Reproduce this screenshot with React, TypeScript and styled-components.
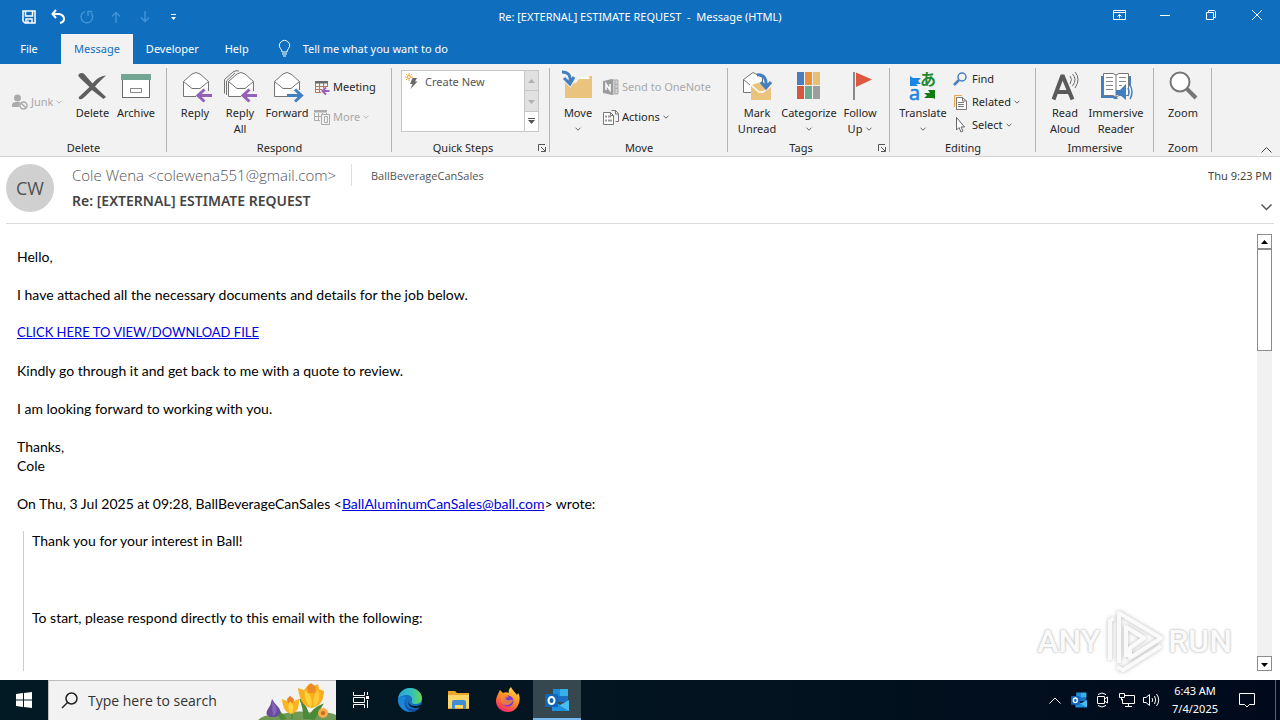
import React from "react";
import styled, { createGlobalStyle } from "styled-components";

const ui = `"Noto Sans", "Open Sans", sans-serif`;
const humanist = `"Open Sans", "Noto Sans", sans-serif`;
const BLUE = "#106ebe";

const GlobalStyle = createGlobalStyle`
  *, *::before, *::after { box-sizing: border-box; }
  body { margin: 0; font-family: ${ui}; font-size: 11px; color: #262626; background: #fff; }
  button, input { font: inherit; color: inherit; }
  button { border: 0; background: none; padding: 0; cursor: pointer; }
  svg { display: block; flex: none; overflow: visible; }
  p { margin: 0; }
`;

const Window = styled.div`
  display: flex;
  flex-direction: column;
  height: 100vh;
  overflow: hidden;
`;

/* ---------- title bar and tabs ---------- */

const TitleBar = styled.header`
  display: grid;
  grid-template-columns: 1fr auto 1fr;
  align-items: center;
  height: 34px;
  flex: none;
  background: ${BLUE};
  color: #fff;
`;

const QuickAccess = styled.div`
  display: flex;
  align-items: center;
  padding-left: 14px;
`;

const QuickButton = styled.button<{ $dim?: boolean }>`
  display: grid;
  place-items: center;
  width: 29px;
  height: 32px;
  color: ${(p) => (p.$dim ? "#3f93d8" : "#fff")};
`;

const WindowTitle = styled.h1`
  margin: 0;
  padding-bottom: 2px;
  font-size: 11px;
  font-weight: 400;
  white-space: pre;
`;

const WindowButtons = styled.div`
  display: flex;
  justify-content: flex-end;
  height: 34px;
  padding-bottom: 4px;
`;

const WindowButton = styled.button`
  display: grid;
  place-items: center;
  width: 46px;
`;

const TabBar = styled.nav`
  display: flex;
  align-items: stretch;
  height: 30px;
  flex: none;
  background: ${BLUE};
  color: #fff;
`;

const Tab = styled.button<{ $active?: boolean; $file?: boolean }>`
  min-width: ${(p) => (p.$file ? 61 : 50)}px;
  padding: 0 ${(p) => (p.$file ? 16 : 13)}px 2px 13px;
  color: ${(p) => (p.$active ? BLUE : "#fff")};
  background: ${(p) => (p.$active ? "#f2f2f2" : "transparent")};
`;

const TellMe = styled.button`
  display: flex;
  align-items: center;
  gap: 12px;
  padding: 0 0 2px 16px;
  color: #fff;
`;

/* ---------- ribbon ---------- */

const Ribbon = styled.div`
  display: flex;
  height: 93px;
  flex: none;
  background: #f2f2f2;
  border-bottom: 1px solid #d2d2d2;
`;

const Group = styled.section<{ $width: number }>`
  display: flex;
  flex-direction: column;
  flex: none;
  width: ${(p) => p.$width}px;
  padding-top: 4px;
  position: relative;

  &::after {
    content: "";
    position: absolute;
    right: 0;
    top: 4px;
    bottom: 4px;
    width: 1px;
    background: #b4b4b4;
  }
`;

const GroupBody = styled.div<{ $pad?: number }>`
  display: flex;
  align-items: flex-start;
  flex: 1;
  padding-left: ${(p) => p.$pad ?? 6}px;
`;

const GroupFooter = styled.div`
  display: flex;
  align-items: center;
  height: 16px;
`;

const GroupName = styled.h2`
  flex: 1;
  margin: 0;
  font-size: 11px;
  font-weight: 400;
  line-height: 16px;
  text-align: center;
`;

const Launcher = styled.button`
  display: grid;
  place-items: center;
  width: 16px;
  height: 16px;
`;

const BigButton = styled.button<{ $width: number }>`
  display: flex;
  flex-direction: column;
  align-items: center;
  flex: none;
  gap: 3px;
  width: ${(p) => p.$width}px;
  padding-top: 2px;
  line-height: 16px;
`;

const BigLabel = styled.span`
  display: flex;
  flex-direction: column;
  align-items: center;
  white-space: nowrap;
`;

const LabelLine = styled.span`
  display: flex;
  align-items: center;
  gap: 4px;
  height: 16px;
`;

const columnTop = { 1: 23, 2: 8, 3: 0 };

const SmallColumn = styled.div<{ $rows: 1 | 2 | 3 }>`
  display: flex;
  flex-direction: column;
  gap: ${(p) => (p.$rows === 2 ? 8 : 1)}px;
  padding: ${(p) => columnTop[p.$rows]}px ${(p) => (p.$rows === 1 ? 8 : 0)}px 0 3px;
`;

const SmallButton = styled.button<{ $dim?: boolean }>`
  display: flex;
  align-items: center;
  gap: 3px;
  height: 22px;
  line-height: 16px;
  white-space: nowrap;
  color: ${(p) => (p.$dim ? "#a9a9a9" : "#262626")};
`;

const Gallery = styled.div`
  display: flex;
  flex: none;
  width: 138px;
  height: 62px;
  margin-top: 2px;
  background: #fff;
  border: 1px solid #c6c6c6;
`;

const GalleryItem = styled.button`
  display: flex;
  align-items: center;
  flex: 1;
  gap: 4px;
  height: 20px;
  padding-left: 3px;
  color: #555;
`;

const GallerySteps = styled.div`
  display: flex;
  flex-direction: column;
  width: 14px;
  border-left: 1px solid #c6c6c6;
`;

const GalleryStep = styled.button<{ $dim?: boolean }>`
  display: grid;
  place-items: center;
  flex: 1;
  background: ${(p) => (p.$dim ? "#e1e1e1" : "#fff")};
  color: ${(p) => (p.$dim ? "#b0b0b0" : "#555")};
  & + & { border-top: 1px solid #c6c6c6; }
`;

const Collapse = styled.button`
  align-self: flex-end;
  margin: 0 8px 3px auto;
`;

/* ---------- message ---------- */

const MessageHead = styled.div`
  display: flex;
  flex: none;
  gap: 18px;
  height: 67px;
  margin: 0 6px;
  border-bottom: 1px solid #dcdcdc;
`;

const Avatar = styled.div`
  display: grid;
  place-items: center;
  flex: none;
  width: 48px;
  height: 48px;
  margin-top: 7px;
  border-radius: 50%;
  background: #d0d0d0;
  color: #505050;
  font-family: ${humanist};
  font-size: 18px;
`;

const HeadText = styled.div`
  flex: 1;
  padding-top: 7px;
`;

const SenderRow = styled.div`
  display: flex;
  align-items: center;
  height: 22px;
  font-family: ${humanist};
  color: #555;
`;

const Sender = styled.span`
  padding-right: 15px;
  border-right: 1px solid #dedede;
  font-size: 15px;
  font-weight: 300;
  line-height: 22px;
`;

const Recipient = styled.span`
  padding-left: 19px;
`;

const Subject = styled.h2`
  margin: 2px 0 0;
  font-size: 14px;
  font-weight: 600;
  line-height: 26px;
  color: #444;
`;

const HeadMeta = styled.div`
  display: flex;
  flex-direction: column;
  align-items: flex-end;
  gap: 19px;
  padding: 10px 2px 0 0;
  line-height: 18px;
  color: #444;
`;

const Reading = styled.main`
  display: flex;
  flex: 1;
  min-height: 0;
  padding: 10px 8px 9px 17px;
  position: relative;
`;

const Letter = styled.article`
  flex: 1;
  overflow: hidden;
  padding-top: 13px;
  font-family: Lato, "Open Sans", sans-serif;
  font-size: 14px;
  line-height: 19px;
  color: #000;

  p + p { margin-top: 19px; }
  a { color: #0000e0; }
`;

const LinkLine = styled.p`
  font-size: 13px;
`;

const Quote = styled.blockquote`
  margin: 18px 0 0 6px;
  padding-left: 8px;
  height: 142px;
  border-left: 1px solid #ccc;
  p + p { margin-top: 58px; }
`;

const Scrollbar = styled.div`
  display: flex;
  flex-direction: column;
  width: 15px;
  background: #f1f1f1;
`;

const ScrollArrow = styled.button`
  display: grid;
  place-items: center;
  height: 15px;
  border: 1px solid #8c8c8c;
  background: #fff;
  color: #000;
`;

const ScrollTrack = styled.div`
  flex: 1;
`;

const ScrollThumb = styled.div`
  height: 102px;
  border: 1px solid #8c8c8c;
  background: #fff;
`;

const Watermark = styled.div`
  position: absolute;
  right: 48px;
  bottom: 8px;
  display: flex;
  align-items: center;
  gap: 4px;
  font-family: Roboto, "Liberation Sans", sans-serif;
  font-size: 32px;
  font-weight: 500;
  line-height: 62px;
  color: #fafafa;
  text-shadow: 0 0 3px #bbb, 0 0 2px #ccc;
  pointer-events: none;

  svg { filter: drop-shadow(0 0 2px #bbb); }
`;

/* ---------- taskbar ---------- */

const Taskbar = styled.footer`
  display: flex;
  flex: none;
  height: 40px;
  background: linear-gradient(90deg, #021a24, #03131f 60%, #000a1c);
  color: #fff;
`;

const TaskButton = styled.button<{ $active?: boolean }>`
  display: grid;
  place-items: center;
  width: 48px;
  background: ${(p) => (p.$active ? "#37474f" : "transparent")};
  box-shadow: ${(p) => (p.$active ? "inset 0 -2px #76b9ed" : "none")};
`;

const Search = styled.label`
  display: flex;
  align-items: center;
  width: 288px;
  padding-left: 12px;
  gap: 10px;
  background: #f2f2f2;
  border: 1px solid #bdbdbd;
  border-width: 1px 0 0 1px;
`;

const SearchInput = styled.input`
  flex: 1;
  min-width: 0;
  padding: 0;
  border: 0;
  outline: 0;
  background: none;
  font-family: ${humanist};
  font-size: 14px;
  color: #333;
  &::placeholder { color: #333; opacity: 1; }
`;

const Pinned = styled.div`
  display: flex;
  gap: 1px;
  padding-left: 1px;
`;

const Tray = styled.div`
  display: flex;
  margin-left: auto;
`;

const TrayButton = styled.button<{ $wide?: boolean }>`
  display: grid;
  place-items: center;
  width: ${(p) => (p.$wide ? 56 : 24)}px;
`;

const Clock = styled.button`
  width: 48px;
  margin-left: 8px;
  line-height: 18px;
  white-space: nowrap;
`;

const ShowDesktop = styled.button`
  width: 5px;
  border-left: 1px solid #5b6570;
`;

/* ---------- drawings ---------- */

const Chevron = ({ color = "#666" }: { color?: string }) => (
  <svg width="6" height="4" viewBox="0 0 6 4" fill="none" stroke={color}>
    <path d="M.5 .7 3 3.2 5.500 .7" />
  </svg>
);

const envelope = "M4.500 26.500V11.500L13 4Q17 1 21 4L29.500 11.500V26.500Z";
const flap = "M4.500 11.500 13 18.500H21L29.500 11.500";

const ReplyIcon = ({ all = false }: { all?: boolean }) => (
  <svg width="32" height="32" viewBox="0 0 32 32" fill="none" stroke="#747474">
    {all && <path d="M.5 23.500V9.500L9 2Q12 0 15 1M2.500 25V11L11 3" />}
    <path d={envelope} fill="#fff" />
    <path d={flap} />
    <path d="M17 27V24L25 18H30V32H19Z" fill="#f2f2f2" stroke="none" />
    <path d="M29.500 17V21" />
    <path d="M33 25.500H20M25.500 19.500 19 25.500l6.500 6" stroke="#9560b8" strokeWidth="3" />
  </svg>
);

const ForwardIcon = () => (
  <svg width="32" height="32" viewBox="0 0 32 32" fill="none" stroke="#747474">
    <g transform="translate(-1 0)">
      <path d={envelope} fill="#fff" />
      <path d={flap} />
    </g>
    <path d="M16 27V23H22L25 18H30V32H17Z" fill="#f2f2f2" stroke="none" />
    <path d="M28.500 17V20" />
    <path d="M16 25.500H29M24 19.500l6.500 6-6.500 6" stroke="#427fc0" strokeWidth="3" />
  </svg>
);

const DeleteIcon = () => (
  <svg width="32" height="32" viewBox="0 0 32 32">
    <path fill="#5f5f5f" d="M3 4C6 2 8 3 10 6L16.500 13.500C20 9 25 6 30 5.500C26 9 22 13 19 16.500L30 27 27.500 29 16 20C12 23 9 27 6 29C3 30 1.500 28 4 26L13.500 17 5 9C3 7 1.500 5.500 3 4Z" />
  </svg>
);

const ArchiveIcon = () => (
  <svg width="32" height="32" viewBox="0 0 32 32">
    <rect x="2.500" y="9.500" width="27" height="18" fill="#fff" stroke="#6b6b6b" />
    <rect x="1" y="4" width="30" height="6" fill="#72a592" />
    <rect x="10.500" y="18.500" width="11" height="4" fill="none" stroke="#8a8a8a" />
  </svg>
);

const JunkIcon = () => (
  <svg width="16" height="16" viewBox="0 0 16 16">
    <circle cx="5.500" cy="4" r="3.500" fill="#ababab" />
    <path d="M0 13V10Q1 8 4 8H8L7 13Z" fill="#ababab" />
    <circle cx="11.500" cy="11.500" r="3.500" fill="#f2f2f2" stroke="#ababab" strokeWidth="1.500" />
    <path d="m9 9 5 5" stroke="#ababab" strokeWidth="1.500" />
  </svg>
);

const MeetingIcon = () => (
  <svg width="16" height="16" viewBox="0 0 16 16" fill="none">
    <path d="M1.500 4V13.500H7M13.500 4V8M1.500 7.500H13M5.500 4V13M9.500 4V9M1.500 10.500H8" stroke="#b97a52" />
    <path d="M1 2H14V4.500H1Z" fill="#6b6b6b" />
    <path d="M15.500 12H9M12 8.500 8.500 12l3.500 3.500" stroke="#9560b8" strokeWidth="2" />
  </svg>
);

const MoreIcon = () => (
  <svg width="16" height="16" viewBox="0 0 16 16" fill="none" stroke="#ababab">
    <path d="M.5 4V11.500H6M.5 7.500H7M4.500 4V11M8.500 4V5M12.500 4V5" />
    <path d="M0 1H13V3.500H0Z" fill="#ababab" stroke="none" />
    <path d="M7.500 5.500H15.500V15.500H7.500ZM10.500 7.500H13.500V13.500H10.500Z" />
  </svg>
);

const QuickStepIcon = () => (
  <svg width="16" height="16" viewBox="0 0 16 16">
    <path d="M7.500 5H12L10 8.500H12.500L5.500 16 7.500 11H5Z" fill="#6b6b6b" />
    <path d="M4 0V2M4 6V8M0 4H2M6 4H8M1 1 2.500 2.500M7 1 5.500 2.500M1 7 2.500 5.500" stroke="#e8a64a" fill="none" />
    <circle cx="4" cy="4" r="1.500" stroke="#e8a64a" fill="#fff" />
  </svg>
);

const MoveIcon = () => (
  <svg width="32" height="32" viewBox="0 0 32 32">
    <path d="M3 28V13H14L18 8H26L28 6H30V28Z" fill="#eac47f" />
    <path d="M19 7H26L28 9H17Z" fill="#fff" />
    <path d="M0 1C7 0 10 4 8.500 12M2 8l6 6 5-7" fill="none" stroke="#f2f2f2" strokeWidth="5" />
    <path d="M0 2C6 2 9 5 8 12M2 8l6 6 4-7" fill="none" stroke="#427fc0" strokeWidth="3" />
  </svg>
);

const OneNoteIcon = () => (
  <svg width="16" height="16" viewBox="0 0 16 16">
    <path d="M6 1H15V15H6Z" fill="#d0d0d0" stroke="#ababab" />
    <path d="M12 2V14M12 5.500H15M12 9.500H15" stroke="#ababab" />
    <path d="M0 2 10 0V16L0 14Z" fill="#9c9c9c" />
    <path d="M3 11V5L7 11V5" fill="none" stroke="#fff" strokeWidth="1.500" />
  </svg>
);

const ActionsIcon = () => (
  <svg width="16" height="16" viewBox="0 0 16 16" fill="none" stroke="#777">
    <path d="M.5 3.500H7.500L10.500 6.500V15.500H.5ZM7.500 3.500V6.500H10.500" fill="#fff" />
    <path d="M5 7.500H8M5 11.500H9M2 7.500H4M2 11.500H4" strokeWidth="2" stroke="#999" />
    <path d="M8.500 1.500H12.500L15.500 4.500V12.500H12.500M12.500 1.500V5H15" />
  </svg>
);

const UnreadIcon = () => (
  <svg width="32" height="32" viewBox="0 0 32 32" fill="none">
    <path d="M2.500 22.500V9.500L12 2.500L21.500 7.500V22.500Z" fill="#fff" stroke="#747474" />
    <path d="M2.500 9.500 9 15" stroke="#747474" />
    <path d="M10 15 20 12 30 16V30H10Z" fill="#eac47f" />
    <path d="M10 15 18 22H22L30 16" stroke="#fff" strokeWidth="1.500" />
    <path d="M16 5C23 4 26 9 25 17M20 12l5 6 5-6" stroke="#427fc0" strokeWidth="3" />
  </svg>
);

const swatches = ["#4a7dbb", "#e9903f", "#e7c077", "#d6573f", "#6fa890", "#9d9d9d"];

const CategorizeIcon = () => (
  <svg width="32" height="32" viewBox="0 0 32 32">
    {swatches.map((fill, i) => (
      <rect key={fill} x={4 + (i % 3) * 8} y={i < 3 ? 2 : 16} width="7" height="13" fill={fill} />
    ))}
  </svg>
);

const FlagIcon = () => (
  <svg width="32" height="32" viewBox="0 0 32 32">
    <path d="M9 2H11V30H9Z" fill="#8a8a8a" />
    <path d="M12 2.500 28 9.500 12 17Z" fill="#e0573f" />
  </svg>
);

const TranslateIcon = () => (
  <svg width="32" height="32" viewBox="0 0 32 32">
    <text x="13" y="15" fontSize="16" fontWeight="700" fontFamily="'Noto Sans CJK JP', sans-serif" fill="#1f8a2f">あ</text>
    <text x="2" y="30" fontSize="20" fontFamily="'Open Sans', sans-serif" fill="#1a86e0" stroke="#1a86e0" strokeWidth=".6">a</text>
    <path d="M3 6 6 8H14L11 11 14 14H9L11 16H3Z" fill="#1a86e0" />
    <path d="M28 20V29L26 28H17L20 25.500 17 23H23L21 20Z" fill="#107c10" />
  </svg>
);

const FindIcon = () => (
  <svg width="16" height="16" viewBox="0 0 16 16" fill="none" stroke="#4a7dbb">
    <circle cx="9" cy="6" r="4" strokeWidth="1.500" />
    <path d="M6 9 1 14" strokeWidth="2.500" />
  </svg>
);

const RelatedIcon = () => (
  <svg width="16" height="16" viewBox="0 0 16 16" fill="none" stroke="#777">
    <path d="M1.500 13V1.500H9" stroke="#e8a64a" />
    <path d="M3.500 3.500H9.500L13.500 7V15.500H3.500ZM9.500 3.500V7H13.500" fill="#fff" />
    <path d="M5 8.500H11M5 10.500H11M5 12.500H11" />
  </svg>
);

const SelectIcon = () => (
  <svg width="16" height="16" viewBox="0 0 16 16">
    <path d="M3.500 .5V13L6 10.500 8 15 10 14 8 10H11.500Z" fill="#fff" stroke="#666" />
  </svg>
);

const ReadAloudIcon = () => (
  <svg width="32" height="32" viewBox="0 0 32 32" fill="none" stroke="#6a6a6a">
    <path d="M4.500 29.500 13 6.500H14L23.500 29.500M8 22H20" stroke="#5a5a5a" strokeWidth="4" />
    <path d="M21 6Q24 9 21 14M23.500 4Q28.500 9 23.500 16M26 2Q32 9 26 18" />
  </svg>
);

const ImmersiveIcon = () => (
  <svg width="32" height="32" viewBox="0 0 32 32" fill="none">
    <path d="M1 6H4V26H16L18 29H14L13 28H1Z M28 6H31V16H28Z" fill="#427fc0" />
    <path d="M3.500 3.500H13L16 5 19 3.500H28.500V25.500H19L16 27 13 25.500H3.500ZM16 5V26" fill="#fff" stroke="#777" />
    <path d="M6 7.500H13M6 11.500H13M6 15.500H13M6 19.500H13M19 7.500H26M19 11.500H26M19 15.500H22" stroke="#888" />
    <path d="M16 20H20L26 14V30L20 25H16Z" fill="#427fc0" />
    <path d="M28 18Q30 22 28 26M30 15Q34 22 30 29" stroke="#427fc0" strokeWidth="1.500" />
  </svg>
);

const ZoomIcon = () => (
  <svg width="32" height="32" viewBox="0 0 32 32" fill="none" stroke="#777">
    <circle cx="13" cy="12" r="9.500" fill="#fff" strokeWidth="2" />
    <path d="M20 19 29 28" strokeWidth="4" />
  </svg>
);

const LaunchIcon = () => (
  <svg width="8" height="8" viewBox="0 0 8 8" fill="none" stroke="#555">
    <path d="M.5 7V.5H7M3 3l4 4M7.500 3V7.500H3" />
  </svg>
);

const Triangle = ({ up = false, bar = false }: { up?: boolean; bar?: boolean }) => (
  <svg width="7" height="6" viewBox="0 0 7 6" fill="currentColor">
    {bar && <path d="M0 0H7V1H0Z" />}
    <path d={up ? "M0 5H7L3.500 1Z" : "M0 2H7L3.500 6Z"} />
  </svg>
);

const EdgeIcon = () => (
  <svg width="26" height="26" viewBox="0 0 26 26">
    <defs>
      <linearGradient id="edgeTop" x1="0" x2="1">
        <stop offset="0" stopColor="#2aa5dc" />
        <stop offset=".6" stopColor="#35c1b8" />
        <stop offset="1" stopColor="#6ad84f" />
      </linearGradient>
    </defs>
    <circle cx="13" cy="13" r="12" fill="#1670c4" />
    <path d="M1 12C2 5 7 1 13 1C20 1 25 6 25 11C25 15 22 17 18 17C15 17 14 16 15 14C16 10 13 8 10 8C6 8 2 10 1 12Z" fill="url(#edgeTop)" />
    <path d="M9 10C5 15 8 23 15 25C8 25 1 20 1 13C2 10 6 9 9 10Z" fill="#1b87d6" />
    <path d="M9 12C6 17 11 23 18 22C20 22 22 21 23 20C20 24 17 25 15 25C9 24 6 17 9 12Z" fill="#134e9c" />
    <path d="M12 12C10 16 13 19 18 19C21 19 24 18 26 16L24 20C19 22 14 21 12 18C11 16 11 14 12 12Z" fill="#021a24" />
  </svg>
);

const FolderIcon = () => (
  <svg width="24" height="20" viewBox="0 0 24 20">
    <path d="M1 1H8L10 3H22V19H1Z" fill="#e9a52c" />
    <path d="M1 5H22V18H1Z" fill="#fbd668" />
    <path d="M5 19V12Q5 10 7 10H17Q19 10 19 12V19H16V15H8V19Z" fill="#3d8fd1" />
  </svg>
);

const FirefoxIcon = () => (
  <svg width="26" height="26" viewBox="0 0 26 26">
    <defs>
      <linearGradient id="fox" x1=".8" y1="0" x2=".3" y2="1">
        <stop offset="0" stopColor="#ffe14a" />
        <stop offset=".5" stopColor="#ff8a22" />
        <stop offset="1" stopColor="#f5256b" />
      </linearGradient>
    </defs>
    <path d="M3 7L5 3L8 6C10 5 12 5 14 6C13 4 14 2 16 0C17 3 20 5 22 8L23 6C25 9 25 12 24 16C22 22 18 25 13 25C6 25 1 20 1 14C1 11 2 9 3 7Z" fill="url(#fox)" />
    <circle cx="13" cy="14" r="5.500" fill="#7a3cd0" />
    <path d="M6 9C9 7 12 8 14 10C11 10 10 12 12 13C14 14 16 12 18 13C17 19 8 20 6 14Z" fill="#ff8f25" opacity=".75" />
  </svg>
);

const OutlookIcon = ({ size = 24 }: { size?: number }) => (
  <svg width={size} height={size} viewBox="0 0 24 24">
    <path d="M8 1H23V14H8Z" fill="#1a6fc4" />
    <path d="M8 1H15V8H8Z" fill="#1f8ad8" />
    <path d="M15 1H23V8H15Z" fill="#35b1ea" />
    <path d="M7 13 15 17 24 12V23H7Z" fill="#47bdf0" />
    <path d="M7 13 24 23H7Z" fill="#1c90dc" />
    <rect x="0" y="6" width="13" height="13" rx="1" fill="#0f65b8" />
    <ellipse cx="6.500" cy="12.500" rx="3" ry="3.500" fill="none" stroke="#fff" strokeWidth="2" />
  </svg>
);

const Flowers = () => (
  <svg width="78" height="39" viewBox="0 0 78 39">
    <path d="M0 39Q6 33 20 34Q40 28 56 32Q70 30 78 34V39Z" fill="#6f9a55" />
    <path d="M28 38Q20 28 16 27Q22 36 24 39M46 38Q46 26 42 18Q52 30 50 38M50 38Q54 28 64 24Q58 34 56 39M34 38V28" fill="#4c8a3a" stroke="#4c8a3a" strokeWidth="1.500" />
    <path d="M14 18Q16 22 21 27Q25 33 18 36H12Q6 33 10 28Q13 24 14 18Z" fill="#6a4b9c" />
    <path d="M14 20Q14 28 15 35Q20 32 18 26Z" fill="#8666b8" />
    <path d="M24 18 29 20 32 15 36 20 41 18Q42 30 34 33Q25 32 24 18Z" fill="#f9b520" />
    <path d="M29 18 32 15 36 18 35 22H30Z" fill="#ee7f22" />
    <path d="M32 20Q28 26 33 33Q38 26 32 20Z" fill="#ffd44a" />
    <path d="M40 7 46 9 51 3 56 5 60 3 61 8 66 10Q66 24 54 27Q42 26 40 7Z" fill="#f9b01e" />
    <path d="M49 6 53 2 58 6 57 12H50Z" fill="#ee8a24" />
    <path d="M47 9Q45 18 53 27Q56 16 47 9Z" fill="#ffd23c" />
    <path d="M60 8Q54 16 56 26Q64 20 60 8Z" fill="#ffc93a" />
    <circle cx="65" cy="32" r="5" fill="#f5ab4a" />
    <circle cx="65" cy="32" r="2" fill="#c86a1c" />
  </svg>
);

const PlayMark = () => (
  <svg width="60" height="62" viewBox="0 0 60 62" fill="none" stroke="#fafafa" strokeWidth="4" strokeLinejoin="round">
    <path d="M15 53V3L57 28 26 48V38L40 28 22 17V47" />
    <path d="M6 50V11L10 8M13 57 19 60 57 36" />
  </svg>
);

/* ---------- page ---------- */

const Big = ({ icon, lines, width, menu }: { icon: React.ReactNode; lines: string[]; width: number; menu?: boolean }) => (
  <BigButton $width={width}>
    {icon}
    <BigLabel>
      {lines.map((line, i) => (
        <LabelLine key={line}>
          {line}
          {menu && i === 1 && <Chevron />}
        </LabelLine>
      ))}
      {menu && lines.length === 1 && <LabelLine><Chevron /></LabelLine>}
    </BigLabel>
  </BigButton>
);

const Small = ({ icon, label, dim, menu }: { icon: React.ReactNode; label: string; dim?: boolean; menu?: boolean }) => (
  <SmallButton $dim={dim} disabled={dim}>
    {icon}
    {label}
    {menu && <Chevron color={dim ? "#b5b5b5" : "#666"} />}
  </SmallButton>
);

const RibbonGroup = ({ name, width, pad, launcher, children }: { name: string; width: number; pad?: number; launcher?: boolean; children: React.ReactNode }) => (
  <Group $width={width}>
    <GroupBody $pad={pad}>{children}</GroupBody>
    <GroupFooter>
      <GroupName>{name}</GroupName>
      {launcher && <Launcher aria-label={`${name} options`}><LaunchIcon /></Launcher>}
    </GroupFooter>
  </Group>
);

export default function App() {
  return (
    <Window>
      <GlobalStyle />
      <TitleBar>
        <QuickAccess>
          <QuickButton aria-label="Save">
            <svg width="14" height="14" viewBox="0 0 14 14" fill="none" stroke="currentColor" strokeWidth="1.500">
              <path d="M1 1H13V13H3L1 11ZM3.500 1V6H10.500V1M4 13V9H10V13M6 13V10.500" />
            </svg>
          </QuickButton>
          <QuickButton aria-label="Undo">
            <svg width="14" height="14" viewBox="0 0 14 14" fill="none" stroke="currentColor" strokeWidth="2">
              <path d="M5 0 1.500 4 5 8M2 4H8Q13 5 13 9Q13 12 9 13" />
            </svg>
          </QuickButton>
          <QuickButton $dim aria-label="Redo">
            <svg width="14" height="14" viewBox="0 0 14 14" fill="none" stroke="currentColor" strokeWidth="1.500">
              <path d="M5 1.500A5.800 5.800 0 1 0 11 3M8 6V1.500H12.500" />
            </svg>
          </QuickButton>
          <QuickButton $dim aria-label="Previous item">
            <svg width="10" height="12" viewBox="0 0 10 12" fill="none" stroke="currentColor" strokeWidth="1.500">
              <path d="M5 12V1.500M1 5.500l4-4 4 4" />
            </svg>
          </QuickButton>
          <QuickButton $dim aria-label="Next item">
            <svg width="10" height="12" viewBox="0 0 10 12" fill="none" stroke="currentColor" strokeWidth="1.500">
              <path d="M5 0V10.500M1 6.500l4 4 4-4" />
            </svg>
          </QuickButton>
          <QuickButton aria-label="Customize toolbar">
            <svg width="5" height="6" viewBox="0 0 5 6" fill="currentColor">
              <path d="M0 0H5V1H0ZM0 3H5L2.500 6Z" />
            </svg>
          </QuickButton>
        </QuickAccess>
        <WindowTitle>{"Re: [EXTERNAL] ESTIMATE REQUEST  -  Message (HTML)"}</WindowTitle>
        <WindowButtons>
          <WindowButton aria-label="Ribbon display options">
            <svg width="13" height="10" viewBox="0 0 13 10" fill="none" stroke="currentColor">
              <path d="M.5 .5H12.500V9.500H.5ZM.5 2.500H12.500M6.500 8.500V4.500M4.500 6.500l2-2 2 2" />
            </svg>
          </WindowButton>
          <WindowButton aria-label="Minimize">
            <svg width="10" height="1" viewBox="0 0 10 1"><path d="M0 0H10V1H0Z" fill="currentColor" /></svg>
          </WindowButton>
          <WindowButton aria-label="Restore">
            <svg width="10" height="10" viewBox="0 0 10 10" fill="none" stroke="currentColor">
              <path d="M.5 2.500H7.500V9.500H.5ZM2.500 2.500V.5H8.500L9.500 1.500V7.500H7.500" />
            </svg>
          </WindowButton>
          <WindowButton aria-label="Close">
            <svg width="10" height="10" viewBox="0 0 10 10" fill="none" stroke="currentColor"><path d="M0 0 10 10M10 0 0 10" /></svg>
          </WindowButton>
        </WindowButtons>
      </TitleBar>

      <TabBar>
        <Tab $file>File</Tab>
        <Tab $active>Message</Tab>
        <Tab>Developer</Tab>
        <Tab>Help</Tab>
        <TellMe>
          <svg width="13" height="17" viewBox="0 0 13 17" fill="none" stroke="currentColor">
            <path d="M4 12Q4 10 2.500 8.500A5 5 0 1 1 10.500 8.500Q9 10 9 12ZM4 14H9M5 16H8" />
          </svg>
          Tell me what you want to do
        </TellMe>
      </TabBar>

      <Ribbon>
        <RibbonGroup name="Delete" width={167} pad={9}>
          <SmallColumn $rows={1}><Small icon={<JunkIcon />} label="Junk" dim menu /></SmallColumn>
          <Big icon={<DeleteIcon />} lines={["Delete"]} width={44} />
          <Big icon={<ArchiveIcon />} lines={["Archive"]} width={43} />
        </RibbonGroup>
        <RibbonGroup name="Respond" width={225}>
          <Big icon={<ReplyIcon />} lines={["Reply"]} width={44} />
          <Big icon={<ReplyIcon all />} lines={["Reply", "All"]} width={46} />
          <Big icon={<ForwardIcon />} lines={["Forward"]} width={48} />
          <SmallColumn $rows={2}>
            <Small icon={<MeetingIcon />} label="Meeting" />
            <Small icon={<MoreIcon />} label="More" dim menu />
          </SmallColumn>
        </RibbonGroup>
        <RibbonGroup name="Quick Steps" width={158} pad={9} launcher>
          <Gallery>
            <GalleryItem><QuickStepIcon />Create New</GalleryItem>
            <GallerySteps>
              <GalleryStep $dim aria-label="Previous row"><Triangle up /></GalleryStep>
              <GalleryStep $dim aria-label="Next row"><Triangle /></GalleryStep>
              <GalleryStep aria-label="More quick steps"><Triangle bar /></GalleryStep>
            </GallerySteps>
          </Gallery>
        </RibbonGroup>
        <RibbonGroup name="Move" width={178}>
          <Big icon={<MoveIcon />} lines={["Move"]} width={44} menu />
          <SmallColumn $rows={2}>
            <Small icon={<OneNoteIcon />} label="Send to OneNote" dim />
            <Small icon={<ActionsIcon />} label="Actions" menu />
          </SmallColumn>
        </RibbonGroup>
        <RibbonGroup name="Tags" width={162} launcher>
          <Big icon={<UnreadIcon />} lines={["Mark", "Unread"]} width={46} />
          <Big icon={<CategorizeIcon />} lines={["Categorize"]} width={58} menu />
          <Big icon={<FlagIcon />} lines={["Follow", "Up"]} width={44} menu />
        </RibbonGroup>
        <RibbonGroup name="Editing" width={146}>
          <Big icon={<TranslateIcon />} lines={["Translate"]} width={54} menu />
          <SmallColumn $rows={3}>
            <Small icon={<FindIcon />} label="Find" />
            <Small icon={<RelatedIcon />} label="Related" menu />
            <Small icon={<SelectIcon />} label="Select" menu />
          </SmallColumn>
        </RibbonGroup>
        <RibbonGroup name="Immersive" width={118}>
          <Big icon={<ReadAloudIcon />} lines={["Read", "Aloud"]} width={46} />
          <Big icon={<ImmersiveIcon />} lines={["Immersive", "Reader"]} width={56} />
        </RibbonGroup>
        <RibbonGroup name="Zoom" width={58}>
          <Big icon={<ZoomIcon />} lines={["Zoom"]} width={46} />
        </RibbonGroup>
        <Collapse aria-label="Collapse the ribbon">
          <svg width="11" height="6" viewBox="0 0 11 6" fill="none" stroke="#444"><path d="M.5 5.500 5.500 .5 10.500 5.500" /></svg>
        </Collapse>
      </Ribbon>

      <MessageHead>
        <Avatar>CW</Avatar>
        <HeadText>
          <SenderRow>
            <Sender>Cole Wena &lt;colewena551@gmail.com&gt;</Sender>
            <Recipient>BallBeverageCanSales</Recipient>
          </SenderRow>
          <Subject>Re: [EXTERNAL] ESTIMATE REQUEST</Subject>
        </HeadText>
        <HeadMeta>
          <time>Thu 9:23 PM</time>
          <button aria-label="Expand header">
            <svg width="11" height="7" viewBox="0 0 11 7" fill="none" stroke="#555" strokeWidth="1.500"><path d="M.5 .5 5.500 5.500 10.500 .5" /></svg>
          </button>
        </HeadMeta>
      </MessageHead>

      <Reading>
        <Letter>
          <p>Hello,</p>
          <p>I have attached all the necessary documents and details for the job below.</p>
          <LinkLine><a href="#file">CLICK HERE TO VIEW/DOWNLOAD FILE</a></LinkLine>
          <p>Kindly go through it and get back to me with a quote to review.</p>
          <p>I am looking forward to working with you.</p>
          <p>Thanks,<br />Cole</p>
          <p>On Thu, 3 Jul 2025 at 09:28, BallBeverageCanSales &lt;<a href="mailto:BallAluminumCanSales@ball.com">BallAluminumCanSales@ball.com</a>&gt; wrote:</p>
          <Quote>
            <p>Thank you for your interest in Ball!</p>
            <p>To start, please respond directly to this email with the following:</p>
          </Quote>
        </Letter>
        <Scrollbar>
          <ScrollArrow aria-label="Scroll up"><Triangle up /></ScrollArrow>
          <ScrollTrack><ScrollThumb /></ScrollTrack>
          <ScrollArrow aria-label="Scroll down"><Triangle /></ScrollArrow>
        </Scrollbar>
        <Watermark><span>ANY</span><PlayMark /><span>RUN</span></Watermark>
      </Reading>

      <Taskbar>
        <TaskButton aria-label="Start">
          <svg width="16" height="16" viewBox="0 0 16 16" fill="#fff"><path d="M0 2 7 1V7.500H0ZM8 1 16 0V7.500H8ZM0 8.500H7V15L0 14ZM8 8.500H16V16L8 15Z" /></svg>
        </TaskButton>
        <Search>
          <svg width="17" height="17" viewBox="0 0 17 17" fill="none" stroke="#222" strokeWidth="1.500"><circle cx="10.500" cy="6.500" r="5.500" /><path d="M6.500 10.500 1 16" /></svg>
          <SearchInput placeholder="Type here to search" aria-label="Search" />
          <Flowers />
        </Search>
        <Pinned>
          <TaskButton aria-label="Task view">
            <svg width="16" height="16" viewBox="0 0 16 16" fill="none" stroke="#fff"><path d="M.5 0V3.500H11.500V0M.5 5.500H11.500V10.500H.5ZM.5 16V12.500H11.500V16M14.500 0V3M14.500 8V16" /><path d="M13 4H16V7H13Z" fill="#fff" stroke="none" /></svg>
          </TaskButton>
          <TaskButton aria-label="Edge"><EdgeIcon /></TaskButton>
          <TaskButton aria-label="File Explorer"><FolderIcon /></TaskButton>
          <TaskButton aria-label="Firefox"><FirefoxIcon /></TaskButton>
          <TaskButton $active aria-label="Outlook"><OutlookIcon /></TaskButton>
        </Pinned>
        <Tray>
          <TrayButton aria-label="Show hidden icons">
            <svg width="12" height="7" viewBox="0 0 12 7" fill="none" stroke="#fff"><path d="M.5 6.500 6 1 11.500 6.500" /></svg>
          </TrayButton>
          <TrayButton aria-label="Outlook status"><OutlookIcon size={16} /></TrayButton>
          <TrayButton aria-label="Meet now">
            <svg width="14" height="16" viewBox="0 0 14 16" fill="none" stroke="#fff"><path d="M1.500 4.500H8.500V11.500H1.500ZM8.500 7 11.500 5V11L8.500 9M2 2.500Q6 -.5 10 2.500M2 13.500Q6 16.500 10 13.500" /></svg>
          </TrayButton>
          <TrayButton aria-label="Network">
            <svg width="16" height="14" viewBox="0 0 16 14" fill="none" stroke="#fff"><path d="M5 2.500H15.500V10.500H3.500V6M.5 .5H5.500V4.500H.5ZM2.500 4.500V7H3M9.500 10.500V13.500M6 13.500H13" /></svg>
          </TrayButton>
          <TrayButton aria-label="Volume">
            <svg width="17" height="14" viewBox="0 0 17 14" fill="none" stroke="#fff"><path d="M.5 4.500H3L6.500 1.500V12.500L3 9.500H.5ZM9 5Q10.500 7 9 9M11.500 3Q14 7 11.500 11M13.500 1Q18 7 13.500 13" /></svg>
          </TrayButton>
          <Clock>6:43 AM<br />7/4/2025</Clock>
          <TrayButton $wide aria-label="Notifications">
            <svg width="16" height="16" viewBox="0 0 16 16" fill="none" stroke="#fff"><path d="M.5 1.500H15.500V12.500H10.500L8 15 5.500 12.500H.5Z" /></svg>
          </TrayButton>
          <ShowDesktop aria-label="Show desktop" />
        </Tray>
      </Taskbar>
    </Window>
  );
}
